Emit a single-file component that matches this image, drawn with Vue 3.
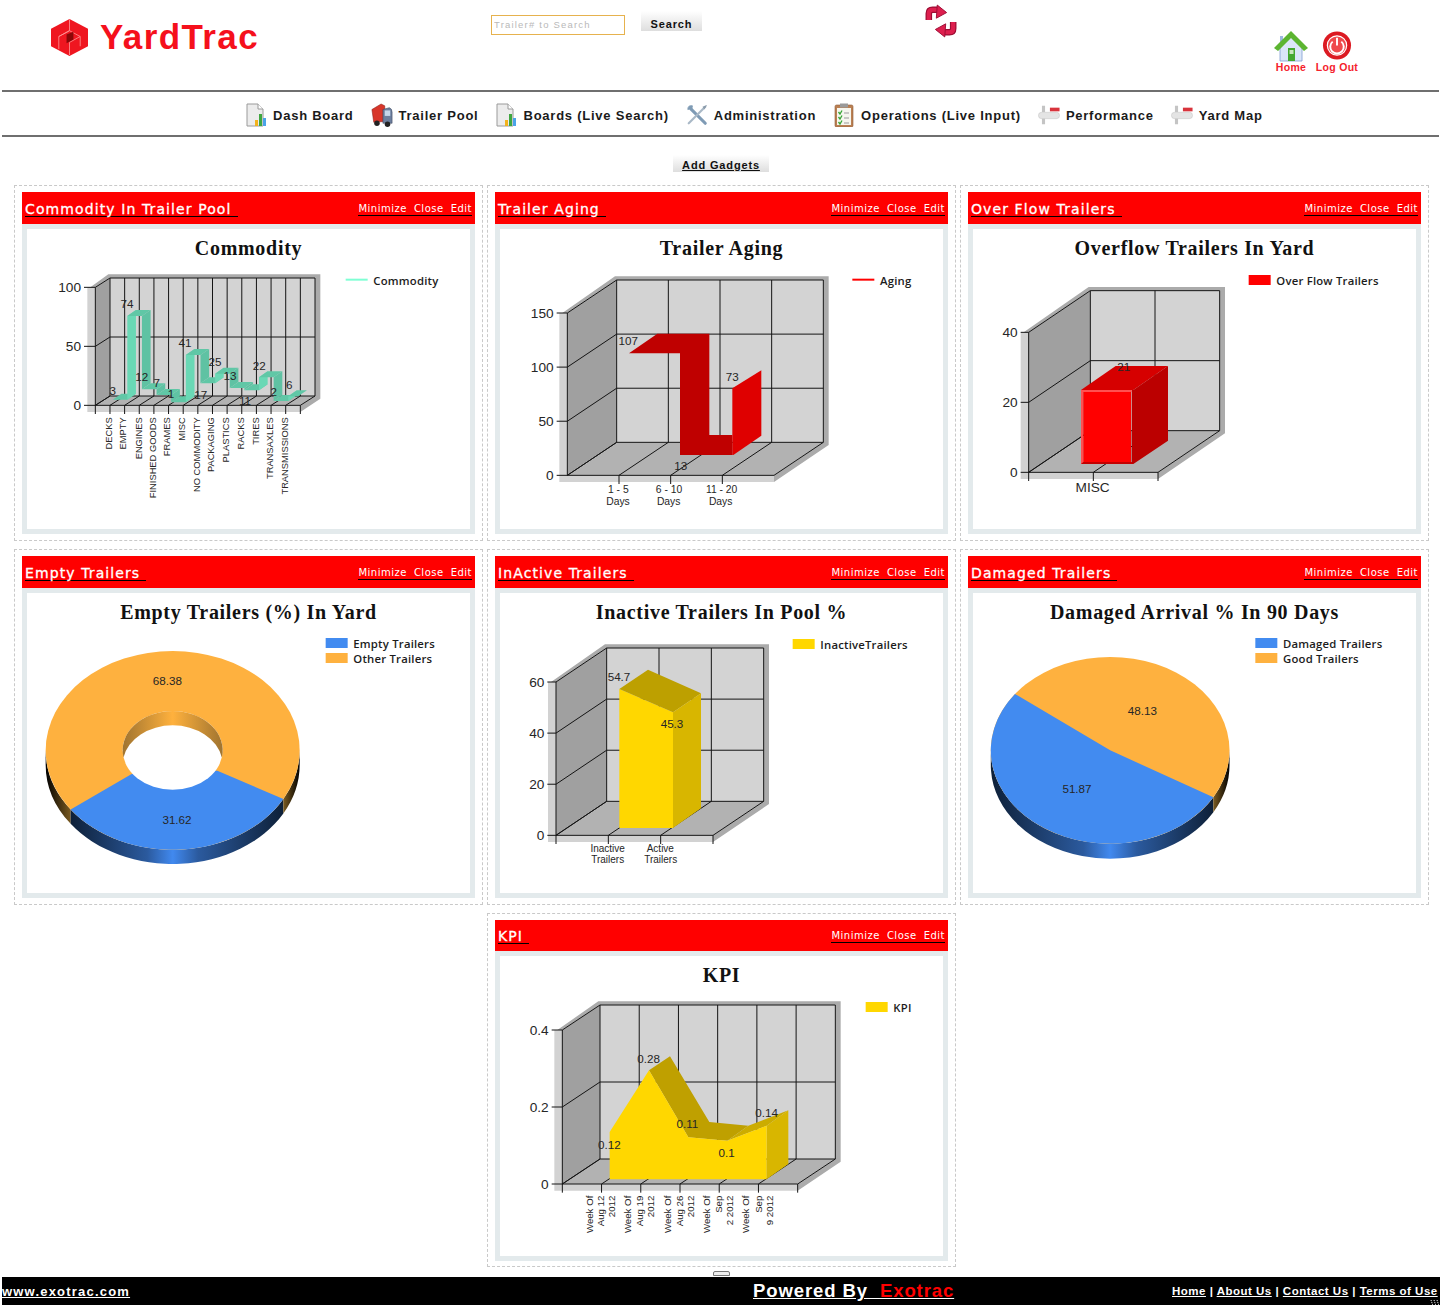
<template>
  <div class="page">
    <!-- shared icons -->
    <svg class="defs" aria-hidden="true">
      <symbol id="ico-doc" viewBox="0 0 22 24">
        <path d="M2 1H13L18 6V23H2Z" fill="#ececec" stroke="#9a9a9a" />
        <path d="M13 1V6H18" fill="#fff" stroke="#9a9a9a" />
        <rect x="10" y="17" width="3" height="6" fill="#f2b21c" />
        <rect x="14" y="11" width="3" height="12" fill="#3fa63f" />
        <rect x="18" y="15" width="3" height="8" fill="#4aa3e8" />
      </symbol>
      <symbol id="ico-truck" viewBox="0 0 24 26">
        <path d="M1 7L11 1L15 3V20L3 21Z" fill="#d8362a" stroke="#8c1d16" stroke-width=".6" />
        <path d="M13 7L20 5Q23 6 23 10V22H13Z" fill="#6d7f9e" stroke="#39435a" stroke-width=".6" />
        <rect x="15" y="8" width="6" height="6" fill="#c6d6ea" />
        <circle cx="6.5" cy="22" r="3" fill="#222" />
        <circle cx="18" cy="23" r="3" fill="#222" />
      </symbol>
      <symbol id="ico-tools" viewBox="0 0 24 24">
        <path d="M5 5L21 21" stroke="#7f9bb5" stroke-width="3.4" stroke-linecap="round" />
        <path d="M7 2Q2 1 2 6L5 5L6 7Z" fill="#7f9bb5" stroke="#7f9bb5" />
        <path d="M21 3L3 21" stroke="#a9b8c6" stroke-width="2.4" stroke-linecap="round" />
        <path d="M23 1L18 3L20 6Z" fill="#8b9cac" />
      </symbol>
      <symbol id="ico-clip" viewBox="0 0 22 24">
        <rect x="2" y="2" width="18" height="22" rx="1.5" fill="#bb8053" stroke="#8d5a35" stroke-width=".6" />
        <rect x="4" y="5" width="14" height="17" fill="#f6f6ee" />
        <rect x="7" y="0.5" width="8" height="4" fill="#9a9a9a" />
        <path d="M5.5 9L7 11L9 7.5M5.5 14L7 16L9 12.5M5.5 19L7 21L9 17.5" fill="none" stroke="#37a534" stroke-width="1.3" />
        <path d="M11 10H16M11 15H16M11 20H16" stroke="#9a9a9a" />
      </symbol>
      <symbol id="ico-perf" viewBox="0 0 24 22">
        <path d="M6 1V8M6 14V21" stroke="#c4c4c4" stroke-width="3.4" />
        <rect x="0.500" y="8" width="23" height="7" rx="3.500" fill="#e4e4e4" stroke="#c6c6c6" stroke-width=".6" />
        <rect x="13" y="3" width="10.500" height="4" fill="#d8333c" />
      </symbol>
    </svg>

    <header class="topbar">
      <div class="brand">
        <svg class="hex" viewBox="0 0 40 38">
          <polygon points="20,0 39,10 39,28 20,38 1,28 1,10" fill="#ef1620" />
          <path d="M20 0.500V12L9 18V31M9 18L20 12L31 18L20 24V37M31 18V28" fill="none" stroke="#ff9a9a" stroke-width=".8" />
          <polygon points="17,16 24,13 24,21 17,25" fill="#8a0808" />
        </svg>
        <span class="brand-name">YardTrac</span>
      </div>
      <div class="search">
        <input class="search-input" type="text" placeholder="Trailer# to Search" />
        <button class="grad-btn search-btn" type="button">Search</button>
      </div>
      <div class="sync">
        <svg class="sync-ico" viewBox="0 0 36 32">
          <g fill="none" stroke-linejoin="round">
            <path d="M5 15V8Q5 4 9 4H15" stroke="#9c0d34" stroke-width="7" />
            <path d="M31 17V24Q31 28 27 28H21" stroke="#9c0d34" stroke-width="7" />
            <path d="M5 15V8Q5 4 9 4H15" stroke="#dd1f4e" stroke-width="4.500" />
            <path d="M31 17V24Q31 28 27 28H21" stroke="#dd1f4e" stroke-width="4.500" />
          </g>
          <polygon points="14,-1 24,7 13,13" fill="#dd1f4e" stroke="#9c0d34" />
          <polygon points="22,33 12,25 23,19" fill="#dd1f4e" stroke="#9c0d34" />
        </svg>
      </div>
      <div class="user-links">
        <a class="user-link">
          <svg class="home-ico" viewBox="0 0 34 31">
            <rect x="6" y="5" width="3" height="9" fill="#9fb8e0" />
            <path d="M6 15V30H28V15L17 6Z" fill="#dbe6f8" stroke="#7d9cd0" stroke-width=".8" />
            <path d="M0 17L17 0L34 17L30 20L17 7L4 20Z" fill="#5cb531" />
            <rect x="14" y="17" width="7" height="13" fill="#45a82f" />
            <rect x="15.500" y="19" width="4" height="4" fill="#c9e6bd" />
          </svg>
          <span>Home</span>
        </a>
        <a class="user-link">
          <svg class="power-ico" viewBox="0 0 30 30">
            <circle cx="15" cy="15" r="14.500" fill="#dc1a22" />
            <circle cx="15" cy="15" r="10" fill="#ef4a4d" stroke="#fff" stroke-width="1.200" />
            <path d="M10.500 11A7 7 0 1 0 19.500 11" fill="none" stroke="#fff" stroke-width="2" />
            <path d="M15 7V15" stroke="#fff" stroke-width="2" />
          </svg>
          <span>Log Out</span>
        </a>
      </div>
    </header>

    <div class="rule"></div>
    <nav class="mainnav">
      <a v-for="item in navItems" :key="item.label" class="nav-item">
        <svg class="nav-ico"><use :href="'#' + item.icon" /></svg>
        <span>{{ item.label }}</span>
      </a>
    </nav>
    <div class="rule"></div>

    <div class="add-row">
      <button class="grad-btn add-btn" type="button">Add Gadgets</button>
    </div>

    <main class="widgets">
      <section
        v-for="(w, i) in charts"
        :key="w.head"
        class="widget"
        :class="{ last: w.last }"
      >
        <div class="bar">
          <span class="bar-title">{{ w.head }}</span>
          <span class="bar-actions"><span>Minimize</span><span>Close</span><span>Edit</span></span>
        </div>
        <div class="body">
          <h2 class="title">{{ w.title }}</h2>
          <svg class="chart" :viewBox="`${w.origin[0]} ${w.origin[1] + 114} 1326 786`">
            <defs v-if="w.pie">
              <linearGradient :id="'rim' + i" x1="0" x2="1" y1="0" y2="0">
                <stop offset="0" stop-color="#0e2038" />
                <stop :offset="w.pie.mid - 0.12" stop-color="#2b5a9e" />
                <stop :offset="w.pie.mid" stop-color="#4189ef" />
                <stop :offset="w.pie.mid + 0.12" stop-color="#2b5a9e" />
                <stop offset="1" stop-color="#0e2038" />
              </linearGradient>
              <linearGradient :id="'rimL' + i" x1="0" x2="1" y1="0" y2="0">
                <stop offset="0" stop-color="#000" />
                <stop offset="1" stop-color="#7a5a20" />
              </linearGradient>
              <linearGradient :id="'rimR' + i" x1="0" x2="1" y1="0" y2="0">
                <stop offset="0" stop-color="#7a5a20" />
                <stop offset="1" stop-color="#000" />
              </linearGradient>
              <linearGradient :id="'wall' + i" x1="0" x2="1" y1="0" y2="0">
                <stop offset="0" stop-color="#a07430" />
                <stop offset=".5" stop-color="#ffb13d" />
                <stop offset="1" stop-color="#a07430" />
              </linearGradient>
            </defs>

            <template v-if="w.pie">
              <path :d="w.pie.rimLeft" :fill="`url(#rimL${i})`" />
              <path :d="w.pie.rimBlue" :fill="`url(#rim${i})`" />
              <path :d="w.pie.rimRight" :fill="`url(#rimR${i})`" />
              <ellipse :cx="w.pie.cx" :cy="w.pie.cy" :rx="w.pie.rx" :ry="w.pie.ry" fill="#feb13f" />
              <path :d="w.pie.blue" fill="#428bf0" />
              <template v-if="w.pie.hole">
                <ellipse :cx="w.pie.cx" :cy="w.pie.cy" :rx="w.pie.hole[0]" :ry="w.pie.hole[1]" fill="#fff" />
                <path :d="w.pie.wall" :fill="`url(#wall${i})`" />
              </template>
            </template>

            <polygon v-for="(p, n) in w.polys" :key="'p' + n" :points="p.pts" :fill="p.fill" />
            <line
              v-for="(l, n) in w.lines"
              :key="'l' + n"
              :x1="l[0]"
              :y1="l[1]"
              :x2="l[2]"
              :y2="l[3]"
              class="grid-line"
            />
            <polygon v-for="(p, n) in w.series" :key="'s' + n" :points="p.pts" :fill="p.fill" />
            <text
              v-for="(t, n) in w.texts"
              :key="'t' + n"
              :x="t.x"
              :y="t.y"
              :font-size="t.size || 35"
              :text-anchor="t.anchor || 'middle'"
              :transform="t.rot ? `rotate(-90 ${t.x} ${t.y})` : null"
              dominant-baseline="central"
              class="label"
            >{{ t.t }}</text>

            <g v-for="(l, n) in w.legend" :key="'k' + n">
              <line v-if="l.line" :x1="l.x" :x2="l.x + 66" :y1="l.y" :y2="l.y" :stroke="l.color" stroke-width="6" />
              <rect v-else :x="l.x" :y="l.y - 15" width="66" height="30" :fill="l.color" />
              <text :x="l.x + 83" :y="l.line ? l.y + 3 : l.y" dominant-baseline="central" font-size="34" class="legend">{{ l.t }}</text>
            </g>
          </svg>
        </div>
      </section>
    </main>

    <div class="grip"></div>

    <footer class="foot">
      <a class="foot-site">www.exotrac.com</a>
      <a class="foot-power">Powered By&nbsp; <em>Exotrac</em></a>
      <div class="foot-links">
        <a>Home</a> | <a>About Us</a> | <a>Contact Us</a> | <a>Terms of Use</a>
      </div>
      <svg class="foot-corner" viewBox="0 0 10 8">
        <path d="M1 1L3 7M4 1L6 7M7 1L9 7" stroke="#fff" stroke-dasharray="1 1" />
      </svg>
    </footer>
  </div>
</template>

<script setup>
const navItems = [
  { label: 'Dash Board', icon: 'ico-doc' },
  { label: 'Trailer Pool', icon: 'ico-truck' },
  { label: 'Boards (Live Search)', icon: 'ico-doc' },
  { label: 'Administration', icon: 'ico-tools' },
  { label: 'Operations (Live Input)', icon: 'ico-clip' },
  { label: 'Performance', icon: 'ico-perf' },
  { label: 'Yard Map', icon: 'ico-perf' },
];

const pts = (a) => a.map((p) => p.join(',')).join(' ');

// the 3d box behind every bar/line chart. all numbers are in 3x pixels
const box = ({ x0, y0, x1, y1, w, h, cols, labels, tick, ends = true }) => {
  const top = y1 - h;
  const rows = labels.length - 1;
  const polys = [
    { fill: '#d2d2d2', pts: pts([[x0 - 8 * 3, y0 - h], [x0 - 8 * 3, y0 + 20], [x0 + w, y0 + 20], [x0 + w, y0], [x0, y0], [x0, y0 - h]]) },
    { fill: '#ababab', pts: pts([[x0 - 15, y0 - h], [x1 - 5, top - 11], [x1 + w + 16, top - 11], [x1 + w + 16, y1 + 8], [x0 + w, y0 + 20], [x0 + w, y0], [x1 + w, y1], [x1 + w, top], [x1, top], [x0, y0 - h]]) },
    { fill: '#a0a0a0', pts: pts([[x0, y0], [x0, y0 - h], [x1, top], [x1, y1]]) },
    { fill: '#d3d3d3', pts: pts([[x1, y1], [x1, top], [x1 + w, top], [x1 + w, y1]]) },
    { fill: '#b2b2b2', pts: pts([[x0, y0], [x1, y1], [x1 + w, y1], [x0 + w, y0]]) },
  ];
  const lines = [];
  const texts = [];
  for (let k = 0; k <= rows; k++) {
    const d = (h * k) / rows;
    lines.push([x1, y1 - d, x1 + w, y1 - d], [x0, y0 - d, x1, y1 - d], [x0 - tick, y0 - d, x0, y0 - d]);
    texts.push({ x: x0 - tick - 9, y: y0 - d, t: labels[k], size: 41, anchor: 'end' });
  }
  for (let c = 0; c <= cols; c++) {
    const d = (w * c) / cols;
    lines.push([x1 + d, y1, x1 + d, top], [x0 + d, y0, x1 + d, y1]);
    if (ends || (c > 0 && c < cols)) lines.push([x0 + d, y0, x0 + d, y0 + 26]);
  }
  lines.push([x0, y0, x0 + w, y0], [x0, y0, x0, y0 - h]);
  return { polys, lines, texts };
};

const legend = (x, y, list, line = false) =>
  list.map(([t, color], i) => ({ x, y: y + i * 45, t, color, line }));

const vals = (list) => list.map(([t, x, y]) => ({ t, x, y }));

// stepped ribbon of the commodity chart
const commodityRibbon = () => {
  const data = [3, 74, 12, 7, 1, 41, 17, 25, 13, 11, 22, 2, 6];
  const out = [];
  data.forEach((v, i) => {
    const y = 670 - 3.54 * v;
    const xL = 308 + 43.9 * i;
    const xR = i === data.length - 1 ? xL + 30 : xL + 43.9;
    out.push({ fill: '#60c7a6', pts: pts([[xL, y], [xL + 26, y - 18], [xR + 26, y - 18], [xR, y]]) });
    if (i < data.length - 1) {
      const next = 670 - 3.54 * data[i + 1];
      out.push({
        fill: next < y ? '#6ad8b5' : '#5fc2a3',
        pts: pts([[xR, y], [xR + 26, y - 18], [xR + 26, next - 18], [xR, next]]),
      });
    }
  });
  return out;
};

const commodityNames = [
  ['DECKS', 297], ['EMPTY', 340], ['ENGINES', 386], ['FINISHED GOODS', 428], ['FRAMES', 471],
  ['MISC', 515], ['NO COMMODITY', 562], ['PACKAGING', 604], ['PLASTICS', 648], ['RACKS', 693],
  ['TIRES', 737], ['TRANSAXLES', 780], ['TRANSMISSIONS', 826],
];

const kpiNames = [
  [313, 'Week Of'], [346, 'Aug 12'], [381, '2012'],
  [428, 'Week Of'], [465, 'Aug 19'], [498, '2012'],
  [547, 'Week Of'], [583, 'Aug 26'], [617, '2012'],
  [664, 'Week Of'], [702, 'Sep'], [735, '2 2012'],
  [783, 'Week Of'], [820, 'Sep'], [853, '9 2012'],
];

const rim = (p, from, to) => {
  const y = (x) => p.cy + p.ry * Math.sqrt(Math.max(0, 1 - ((x - p.cx) / p.rx) ** 2));
  const [a, b] = [y(from), y(to)];
  return `M${from} ${a}A${p.rx} ${p.ry} 0 0 0 ${to} ${b}L${to} ${b + p.depth}A${p.rx} ${p.ry} 0 0 1 ${from} ${a + p.depth}Z`;
};

// inner wall of the donut: the hole's top arc down to the same arc moved by the depth
const holeWall = (p) => {
  const [hx, hy] = p.hole;
  const yi = p.cy + p.depth / 2;
  const dx = hx * Math.sqrt(1 - (p.depth / 2 / hy) ** 2);
  return `M${p.cx - dx} ${yi}A${hx} ${hy} 0 1 1 ${p.cx + dx} ${yi}A${hx} ${hy} 0 0 0 ${p.cx - dx} ${yi}Z`;
};

const makePie = (p) => ({
  ...p,
  rimLeft: rim(p, p.cx - p.rx, p.splitL),
  rimBlue: rim(p, p.splitL, p.splitR),
  rimRight: rim(p, p.splitR, p.cx + p.rx),
  wall: p.hole ? holeWall(p) : null,
});

const commodityBox = box({ x0: 256, y0: 676, x1: 300, y1: 648, w: 615, h: 354, cols: 14, labels: ['0', '50', '100'], tick: 34 });
const agingBox = box({ x0: 232, y0: 886, x1: 380, y1: 787, w: 620, h: 487, cols: 4, labels: ['0', '50', '100', '150'], tick: 32, ends: false });
const overflowBox = box({ x0: 206, y0: 877, x1: 391, y1: 752, w: 388, h: 420, cols: 2, labels: ['0', '20', '40'], tick: 24 });
const inactiveBox = box({ x0: 198, y0: 871, x1: 350, y1: 769, w: 471, h: 460, cols: 3, labels: ['0', '20', '40', '60'], tick: 26 });
const kpiBox = box({ x0: 232, y0: 822, x1: 345, y1: 747, w: 706, h: 462, cols: 6, labels: ['0', '0.2', '0.4'], tick: 32 });

const charts = [
  {
    head: 'Commodity In Trailer Pool',
    title: 'Commodity',
    origin: [51, 147],
    ...commodityBox,
    series: commodityRibbon(),
    texts: [
      ...commodityBox.texts,
      ...vals([['3', 308, 632], ['74', 351, 371], ['12', 395, 590], ['7', 440, 607], ['1', 483, 640], ['41', 525, 488], ['17', 572, 643], ['25', 615, 545], ['13', 660, 587], ['11', 705, 662], ['22', 748, 557], ['2', 791, 635], ['6', 838, 613]]),
      ...commodityNames.map(([t, x]) => ({ t, x, y: 712, size: 28, anchor: 'end', rot: true })),
    ],
    legend: legend(1007, 299, [['Commodity', '#7fffd4']], true),
  },
  {
    head: 'Trailer Aging',
    title: 'Trailer Aging',
    origin: [30, 147],
    ...agingBox,
    series: [
      { fill: '#bf0000', pts: '417,520 502,461 658,461 658,765 727,765 727,825 570,825 570,520' },
      { fill: '#df0000', pts: '727,625 814,571 814,767 730,825 727,825' },
    ],
    texts: [
      ...agingBox.texts,
      ...vals([['107', 415, 482], ['73', 727, 590], ['13', 572, 857]]),
      { t: '1 - 5', x: 385, y: 929, size: 31 }, { t: 'Days', x: 384, y: 963, size: 31 },
      { t: '6 - 10', x: 537, y: 929, size: 31 }, { t: 'Days', x: 536, y: 963, size: 31 },
      { t: '11 - 20', x: 695, y: 929, size: 31 }, { t: 'Days', x: 692, y: 963, size: 31 },
    ],
    legend: legend(1087, 299, [['Aging', '#ff0000']], true),
  },
  {
    head: 'Over Flow Trailers',
    title: 'Overflow Trailers In Yard',
    origin: [39, 147],
    ...overflowBox,
    series: [
      { fill: '#d60000', pts: '363,630 467,558 624,558 520,630' },
      { fill: '#bb0000', pts: '515,630 520,630 624,558 624,782 520,852 515,852' },
      { fill: '#c40000', pts: '363,846 515,846 520,852 363,852' },
      { fill: '#ff5050', pts: '363,630 515,630 515,636 370,636 370,846 363,852' },
      { fill: '#ff0000', pts: '370,636 513,636 513,846 370,846' },
    ],
    texts: [
      ...overflowBox.texts,
      ...vals([['21', 491, 558]]),
      { t: 'MISC', x: 398, y: 922, size: 41 },
    ],
    legend: legend(866, 300, [['Over Flow Trailers', '#ff0000']]),
  },
  {
    head: 'Empty Trailers',
    title: 'Empty Trailers (%) In Yard',
    origin: [51, 144],
    pie: makePie({
      cx: 488, cy: 616, rx: 381, ry: 298, depth: 43, hole: [150, 118], splitL: 182, splitR: 820, mid: 0.48,
      blue: 'M182 793.5A381 298 0 0 0 820 762.2L622 677L365 687Z',
    }),
    polys: [], lines: [], series: [],
    texts: vals([['68.38', 472, 407], ['31.62', 501, 824]]),
    legend: legend(947, 294, [['Empty Trailers', '#428bf0'], ['Other Trailers', '#feb13f']]),
  },
  {
    head: 'InActive Trailers',
    title: 'Inactive Trailers In Pool %',
    origin: [30, 144],
    ...inactiveBox,
    series: [
      { fill: '#ffd700', pts: '388,432 549,502 549,849 388,849' },
      { fill: '#bda000', pts: '388,432 474,374 633,445 549,502' },
      { fill: '#d8b600', pts: '549,502 633,445 633,790 549,849' },
    ],
    texts: [
      ...inactiveBox.texts,
      ...vals([['54.7', 387, 395], ['45.3', 546, 536]]),
      { t: 'Inactive', x: 353, y: 911, size: 30 }, { t: 'Trailers', x: 353, y: 944, size: 30 },
      { t: 'Active', x: 511, y: 911, size: 30 }, { t: 'Trailers', x: 512, y: 944, size: 30 },
    ],
    legend: legend(908, 297, [['InactiveTrailers', '#ffd700']]),
  },
  {
    head: 'Damaged Trailers',
    title: 'Damaged Arrival % In 90 Days',
    origin: [39, 144],
    pie: makePie({
      cx: 450.5, cy: 616, rx: 358, ry: 280, depth: 45, hole: null, splitL: 93, splitR: 760, mid: 0.536,
      blue: 'M450.5 616L165 447.1A358 280 0 1 0 760 756.7Z',
    }),
    polys: [], lines: [], series: [],
    texts: vals([['48.13', 547, 497], ['51.87', 351, 731]]),
    legend: legend(886, 294, [['Damaged Trailers', '#428bf0'], ['Good Trailers', '#feb13f']]),
  },
  {
    head: 'KPI',
    title: 'KPI',
    origin: [45, 138],
    last: true,
    ...kpiBox,
    series: [
      { fill: '#bfa000', pts: '492,481 555,439 673,636 790,647 727,692 610,682' },
      { fill: '#ccac00', pts: '727,692 790,647 910,601 845,647' },
      { fill: '#d8b600', pts: '845,647 910,601 910,762 845,808' },
      { fill: '#ffd700', pts: '374,808 374,666 492,481 610,682 727,692 845,647 845,808' },
    ],
    texts: [
      ...kpiBox.texts,
      ...vals([['0.12', 373, 702], ['0.28', 491, 446], ['0.11', 607, 641], ['0.1', 725, 726], ['0.14', 845, 608]]),
      ...kpiNames.map(([x, t]) => ({ t, x, y: 857, size: 29, anchor: 'end', rot: true })),
    ],
    legend: legend(1142, 291, [['KPI', '#ffd700']]),
  },
];
</script>

<style>
html, body { margin: 0; background: #fff; }
</style>

<style scoped>
.page {
  width: 1442px;
  height: 1307px;
  overflow: hidden;
  font-family: "Liberation Sans", Arial, sans-serif;
  color: #111;
}
.defs { position: absolute; width: 0; height: 0; }

.topbar {
  height: 90px;
  display: grid;
  grid-template-columns: 491px 433px 350px 1fr;
}
.brand {
  display: flex;
  align-items: flex-start;
  gap: 11px;
  padding: 19px 0 0 50px;
}
.hex { width: 39px; height: 37px; }
.brand-name {
  font-size: 35px;
  line-height: 36px;
  font-weight: 700;
  color: #f5101c;
  letter-spacing: 1.400px;
}
.search {
  display: flex;
  align-items: flex-start;
  gap: 16px;
  padding-top: 15px;
}
.search-input {
  width: 134px;
  height: 20px;
  box-sizing: border-box;
  border: 1px solid #e6b24e;
  padding: 0 2px 2px;
  outline: 0;
  font: 9.500px "Liberation Sans", Arial, sans-serif;
  letter-spacing: 1.200px;
}
.search-input::placeholder { color: #b9b9b9; opacity: 1; }
.grad-btn {
  border: 0;
  background: linear-gradient(#fff, #dedede);
  padding: 0;
  font-family: "Liberation Sans", Arial, sans-serif;
  font-weight: 700;
  color: #111;
}
.search-btn {
  width: 61px;
  height: 20px;
  margin-top: -4px;
  padding-top: 6px;
  font-size: 11px;
  letter-spacing: .85px;
}
.sync { padding-top: 6px; }
.sync-ico { display: block; width: 34px; height: 30px; overflow: visible; }
.user-links {
  display: flex;
  align-items: flex-start;
  gap: 7px;
  padding: 31px 0 0 0;
}
.user-link {
  display: flex;
  flex-direction: column;
  align-items: center;
  color: #f5222d;
  font-size: 10.500px;
  font-weight: 700;
  line-height: 10px;
  letter-spacing: .3px;
}
.home-ico { width: 34px; height: 31px; }
.power-ico { width: 30px; height: 29px; margin-bottom: 2px; }
.user-link:first-child { width: 34px; }
.user-link:last-child { width: 44px; }

.rule {
  height: 2px;
  margin: 0 3px 0 2px;
  background: #6f6f6f;
}
.mainnav {
  height: 43px;
  padding: 0 0 0 245px;
  display: flex;
  align-items: center;
  gap: 17px;
}
.nav-item {
  display: flex;
  align-items: center;
  gap: 6px;
  font-size: 13px;
  font-weight: 700;
  letter-spacing: .76px;
  white-space: nowrap;
  color: #1b1b1b;
  padding-top: 3px;
}
.nav-ico { width: 22px; height: 24px; }

.add-row {
  padding: 18px 0 13px;
  display: flex;
  justify-content: center;
}
.add-btn {
  width: 96px;
  height: 17px;
  padding-top: 2px;
  font-size: 11px;
  letter-spacing: .85px;
  text-decoration: underline;
}

.widgets {
  margin-left: 14px;
  display: grid;
  grid-template-columns: repeat(3, 469px);
  column-gap: 4px;
  row-gap: 8px;
}
.widget {
  box-sizing: border-box;
  height: 356px;
  padding: 6px 7px;
  border: 1px dashed #c9c9c9;
  display: flex;
  flex-direction: column;
}
.widget.last {
  grid-column: 2;
  height: 354px;
  padding-bottom: 5px;
}
.bar {
  height: 32px;
  flex: none;
  box-sizing: border-box;
  padding: 0 3px 7px;
  background: #ff0000;
  color: #fff;
  display: flex;
  align-items: flex-end;
  justify-content: space-between;
  font-family: "DejaVu Sans", sans-serif;
}
.widget.last .bar { height: 31px; }
.bar-title {
  font-size: 14px;
  line-height: 14px;
  letter-spacing: 1.100px;
  padding-right: 6px;
  border-bottom: 1px solid #000;
  -webkit-text-stroke: .3px #fff;
  white-space: nowrap;
}
.bar-actions {
  display: flex;
  gap: 7px;
  font-size: 10px;
  line-height: 12px;
  letter-spacing: .5px;
  margin-bottom: 1px;
  border-bottom: 1px solid #000;
}
.body {
  flex: 1;
  min-height: 0;
  border: 5px solid #e3eaec;
  background: #fff;
  display: flex;
  flex-direction: column;
}
.title {
  margin: 0;
  height: 38px;
  flex: none;
  line-height: 38px;
  text-align: center;
  font-family: "Liberation Serif", "Times New Roman", serif;
  font-size: 20px;
  font-weight: 700;
  letter-spacing: .7px;
  color: #111;
}
.chart {
  display: block;
  width: 442px;
  height: 262px;
  flex: none;
}
.grid-line {
  stroke: #141414;
  stroke-width: 3;
}
.label {
  font-family: "Liberation Sans", Arial, sans-serif;
  fill: #262626;
}
.legend {
  font-family: "Open Sans", "Liberation Sans", sans-serif;
  font-weight: 600;
  letter-spacing: .6px;
  fill: #1c1c1c;
}

.grip {
  width: 17px;
  height: 5px;
  margin: 4px auto 1px;
  box-sizing: border-box;
  border: 1px solid #777;
  border-radius: 2px 2px 0 0;
  background: #eee;
}
.foot {
  position: relative;
  height: 28px;
  margin: 0 2px;
  background: #000;
  color: #fff;
  display: grid;
  grid-template-columns: 751px 419px 1fr;
  align-items: center;
  font-weight: 700;
}
.foot a { text-decoration: underline; color: #fff; }
.foot-site {
  font-size: 13px;
  letter-spacing: 1.200px;
}
.foot-power {
  font-size: 18.500px;
  letter-spacing: .9px;
  white-space: nowrap;
}
.foot-power em { font-style: normal; color: #ff0000; }
.foot-links {
  font-size: 11.500px;
  letter-spacing: .5px;
  white-space: nowrap;
}
.foot-corner {
  position: absolute;
  right: 0;
  bottom: -2px;
  width: 10px;
  height: 8px;
}
</style>
